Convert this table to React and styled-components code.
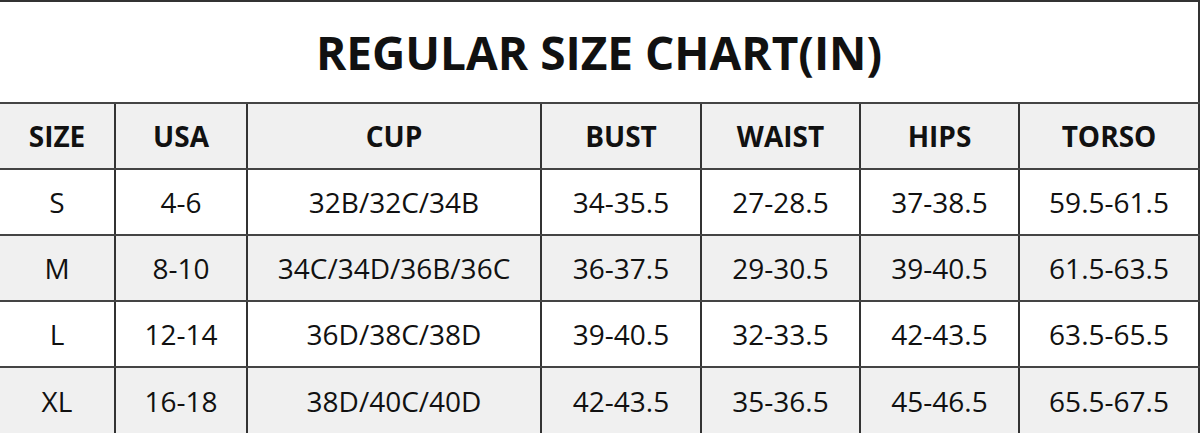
import React from 'react'
import styled, { createGlobalStyle } from 'styled-components'

const GlobalStyle = createGlobalStyle`
    html, body {
        margin: 0;
        padding: 0;
        background: #fff;
    }
    body {
        font-family: "Open Sans", "Liberation Sans", sans-serif;
        color: #111;
    }
`

const Table = styled.table`
    width: 1199px;
    table-layout: fixed;
    border-collapse: collapse;
    border-top: 2px solid #333;
    border-right: 2px solid #333;
`

const Title = styled.th`
    height: 100px;
    padding: 0;
    font-size: 46px;
    font-weight: 700;
    text-align: center;
    border-bottom: 2px solid #444;
`

const Row = styled.tr`
    height: 66px;
    background: ${p => p.$shade ? '#f0f0f0' : '#fff'};

    &:last-child td {
        border-bottom: none;
    }
`

const Cell = styled.td`
    padding: 0;
    text-align: center;
    font-size: 28px;
    font-weight: ${p => p.$head ? 700 : 400};
    border-bottom: 2px solid #444;
    border-left: 2px solid #333;
    white-space: nowrap;

    &:first-child {
        border-left: none;
    }
`

let widths = [115, 132, 294, 160, 159, 159, 180]

let heads = ['SIZE', 'USA', 'CUP', 'BUST', 'WAIST', 'HIPS', 'TORSO']

let rows = [
    ['S', '4-6', '32B/32C/34B', '34-35.5', '27-28.5', '37-38.5', '59.5-61.5'],
    ['M', '8-10', '34C/34D/36B/36C', '36-37.5', '29-30.5', '39-40.5', '61.5-63.5'],
    ['L', '12-14', '36D/38C/38D', '39-40.5', '32-33.5', '42-43.5', '63.5-65.5'],
    ['XL', '16-18', '38D/40C/40D', '42-43.5', '35-36.5', '45-46.5', '65.5-67.5']
]

function App() {

    return (
        <>
            <GlobalStyle />
            <Table>
                <colgroup>
                    {widths.map((w, i) => <col key={i} style={{ width: w }} />)}
                </colgroup>
                <thead>
                    <tr>
                        <Title colSpan={7}>REGULAR SIZE CHART(IN)</Title>
                    </tr>
                </thead>
                <tbody>
                    <Row $shade>
                        {heads.map(h => <Cell key={h} $head>{h}</Cell>)}
                    </Row>
                    {rows.map((r, i) => (
                        <Row key={r[0]} $shade={i % 2 === 1}>
                            {r.map((v, j) => <Cell key={j}>{v}</Cell>)}
                        </Row>
                    ))}
                </tbody>
            </Table>
        </>
    )
}

export default App
